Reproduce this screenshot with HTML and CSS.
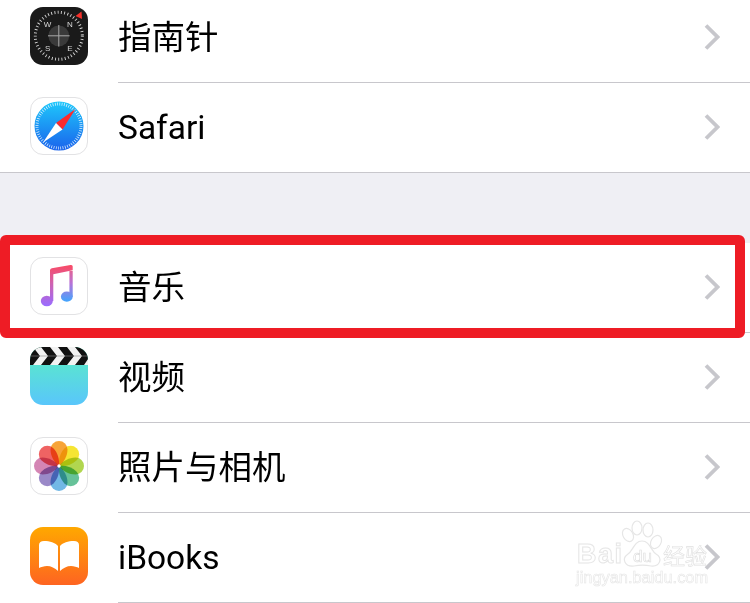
FILE: index.html
```html
<!DOCTYPE html>
<html lang="zh">
<head>
<meta charset="utf-8">
<title>设置</title>
<link rel="stylesheet" href="styles.css">
</head>
<body>
<main class="page">
  <section class="group group-first">
    <div class="row">
      <svg class="icon" viewBox="0 0 58 58">
        <defs><clipPath id="sq"><rect width="58" height="58" rx="13"/></clipPath></defs>
        <rect width="58" height="58" rx="13" fill="#1a1a1a"/>
        <circle cx="28.8" cy="28.8" r="23.5" fill="none" stroke="#d8d8d8" stroke-width="3" stroke-dasharray="0.9 2.4"/>
        <circle cx="28.8" cy="28.8" r="10.4" fill="#3a3a3a"/>
        <path d="M28.8 18V39.6M18 28.8H39.6" stroke="#a8a8a8" stroke-width="1"/>
        <path d="M51.5 4.5L52 12L45.5 9Z" fill="#f5302a"/>
        <text class="cmp" x="17.6" y="20.4">W</text>
        <text class="cmp" x="40" y="20.4">N</text>
        <text class="cmp" x="17.6" y="43.6">S</text>
        <text class="cmp" x="40" y="43.6">E</text>
      </svg>
      <span class="label">指南针</span>
      <svg class="chev" viewBox="0 0 16 26"><path d="M2 1.5L13.5 13L2 24.5" /></svg>
    </div>
    <div class="row">
      <svg class="icon icon-light" viewBox="0 0 58 58">
        <defs><linearGradient id="saf" x1="0" y1="0" x2="0" y2="1"><stop offset="0" stop-color="#1ec8fb"/><stop offset="1" stop-color="#1a63ec"/></linearGradient></defs>
        <circle cx="29" cy="29" r="24.5" fill="url(#saf)"/>
        <circle cx="29" cy="29" r="22" fill="none" stroke="#e6f4ff" stroke-width="3" stroke-dasharray="0.7 1.6"/>
        <path d="M45.5 12L32.5 32.5L26 26Z" fill="#fb2a2e"/>
        <path d="M13 45.5L26 26L32.5 32.5Z" fill="#fff"/>
      </svg>
      <span class="label">Safari</span>
      <svg class="chev" viewBox="0 0 16 26"><path d="M2 1.5L13.5 13L2 24.5" /></svg>
    </div>
  </section>

  <section class="group">
    <div class="row">
      <svg class="icon icon-light" viewBox="0 0 58 58">
        <defs>
          <linearGradient id="mus" gradientUnits="userSpaceOnUse" x1="0" y1="8" x2="0" y2="49"><stop offset="0" stop-color="#fa4a64"/><stop offset="0.45" stop-color="#cf62b0"/><stop offset="1" stop-color="#9a6cff"/></linearGradient>
          <linearGradient id="mus2" gradientUnits="userSpaceOnUse" x1="0" y1="8" x2="0" y2="45"><stop offset="0" stop-color="#f45a78"/><stop offset="0.5" stop-color="#b673d8"/><stop offset="1" stop-color="#3fa6ff"/></linearGradient>
        </defs>
        <path d="M20 13.5Q20 11.6 21.8 11.2L40.5 8Q42.7 7.6 42.7 9.6V13.3L23.3 17.3V44H20Z" fill="url(#mus)"/>
        <ellipse cx="16.8" cy="44" rx="6" ry="5.2" fill="url(#mus)"/>
        <path d="M39.4 14H42.7V40H39.4Z" fill="url(#mus2)"/>
        <ellipse cx="36.8" cy="39.7" rx="5.9" ry="5.1" fill="url(#mus2)"/>
      </svg>
      <span class="label">音乐</span>
      <svg class="chev" viewBox="0 0 16 26"><path d="M2 1.5L13.5 13L2 24.5" /></svg>
    </div>
    <div class="row">
      <svg class="icon" viewBox="0 0 58 58">
        <defs><linearGradient id="vid" x1="0" y1="0" x2="0" y2="1"><stop offset="0" stop-color="#5aefc2"/><stop offset="1" stop-color="#59c6fb"/></linearGradient></defs>
        <g clip-path="url(#sq)">
          <rect width="58" height="58" fill="url(#vid)"/>
          <rect width="58" height="18" fill="#111"/>
          <path d="M3 0H11L18 9L11 18H3L10 9ZM20 0H28L35 9L28 18H20L27 9ZM37 0H45L52 9L45 18H37L44 9ZM54 0H58V18H54L58 12V6Z" fill="#f2f2f2"/>
          <rect y="8.7" width="58" height="0.6" fill="#888"/>
        </g>
      </svg>
      <span class="label">视频</span>
      <svg class="chev" viewBox="0 0 16 26"><path d="M2 1.5L13.5 13L2 24.5" /></svg>
    </div>
    <div class="row">
      <svg class="icon icon-light" viewBox="0 0 58 58">
        <defs>
          <path id="petal" d="M29 29C24 25 20.5 19 20.5 12.5A8.5 8.5 0 0 1 37.5 12.5C37.5 19 34 25 29 29Z"/>
        </defs>
        <g class="petals">
          <use href="#petal" fill="#f79a22"/>
          <use href="#petal" fill="#f5e31c" transform="rotate(45 29 29)"/>
          <use href="#petal" fill="#a9d23c" transform="rotate(90 29 29)"/>
          <use href="#petal" fill="#55bb8e" transform="rotate(135 29 29)"/>
          <use href="#petal" fill="#62b0e4" transform="rotate(180 29 29)"/>
          <use href="#petal" fill="#8f7cc2" transform="rotate(225 29 29)"/>
          <use href="#petal" fill="#d078ac" transform="rotate(270 29 29)"/>
          <use href="#petal" fill="#ee5252" transform="rotate(315 29 29)"/>
        </g>
        <circle cx="29" cy="29" r="1.7" fill="#fff"/>
      </svg>
      <span class="label">照片与相机</span>
      <svg class="chev" viewBox="0 0 16 26"><path d="M2 1.5L13.5 13L2 24.5" /></svg>
    </div>
    <div class="row">
      <svg class="icon" viewBox="0 0 58 58">
        <defs><linearGradient id="bok" x1="0" y1="0" x2="0" y2="1"><stop offset="0" stop-color="#ffa800"/><stop offset="1" stop-color="#fe6421"/></linearGradient></defs>
        <rect width="58" height="58" rx="13" fill="url(#bok)"/>
        <path d="M9 18C9 15.5 11 14 14 14C20 14 25 15.5 28 19V44C25 41 21 39 17 39C14 39 11 40 9 41ZM49 18C49 15.5 47 14 44 14C38 14 33 15.5 30 19V44C33 41 37 39 41 39C44 39 47 40 49 41Z" fill="#fff"/>
      </svg>
      <span class="label">iBooks</span>
      <svg class="chev" viewBox="0 0 16 26"><path d="M2 1.5L13.5 13L2 24.5" /></svg>
    </div>
  </section>
</main>

<div class="highlight"></div>

<div class="watermark">
  <svg class="paw" viewBox="0 0 45 50">
    <g fill="#fff" stroke="#e6e6e6" stroke-width="1.2">
      <ellipse cx="8" cy="15" rx="5" ry="7" transform="rotate(-30 8 15)"/>
      <ellipse cx="17" cy="8" rx="5" ry="7"/>
      <ellipse cx="28" cy="10" rx="5" ry="7"/>
      <ellipse cx="36" cy="22" rx="5" ry="7" transform="rotate(30 36 22)"/>
      <path d="M22 21C14 21 13 31 8 34C1 39 5 47 14 46C19 45 26 45 31 46C40 47 43 38 36 34C31 31 30 21 22 21Z"/>
    </g>
  </svg>
  <span class="wm-bai">Bai</span>
  <span class="wm-du">du</span>
  <span class="wm-jy">经验</span>
  <span class="wm-url">jingyan.baidu.com</span>
</div>
</body>
</html>
```

FILE: styles.css
```css
html, body {
  margin: 0;
  padding: 0;
  height: 603px;
  overflow: hidden;
  background: #fff;
}

.page {
  width: 750px;
  background: #efeff4;
  font-family: Roboto, "Noto Sans CJK SC", sans-serif;
  color: #000;
}

.group {
  background: #fff;
}

.group-first {
  margin-top: -7px;
  margin-bottom: 70px;
  border-bottom: 1px solid #c8c7cc;
}

.row {
  position: relative;
  display: flex;
  align-items: flex-start;
  height: 89px;
  padding-left: 30px;
  padding-right: 30px;
}

.row::after {
  content: "";
  position: absolute;
  left: 118px;
  right: 0;
  bottom: -1px;
  height: 1px;
  background: #c8c7cc;
}

.group-first .row:last-child::after {
  display: none;
}

.row + .row {
  margin-top: 1px;
}

.icon {
  flex: none;
  width: 58px;
  height: 58px;
  margin-top: 14px;
}

.icon-light {
  outline: 1px solid #e2e2e4;
  outline-offset: -1px;
  border-radius: 13px;
  background: #fff;
}

.label {
  flex: 1;
  margin-left: 30px;
  margin-top: 25px;
  font-size: 33.5px;
  line-height: 40px;
  white-space: nowrap;
}

.chev {
  flex: none;
  width: 16px;
  height: 26px;
  margin-top: 31px;
  fill: none;
  stroke: #c7c7cc;
  stroke-width: 3.8;
}

.cmp {
  font-family: "Liberation Sans", sans-serif;
  font-size: 8px;
  fill: #d8d8d8;
  text-anchor: middle;
}

.petals use {
  mix-blend-mode: multiply;
  opacity: 0.9;
}

.highlight {
  position: absolute;
  left: 0;
  top: 235px;
  width: 745px;
  height: 103px;
  box-sizing: border-box;
  border: 10px solid #ee1c25;
  border-radius: 6px;
}

.watermark {
  position: absolute;
  left: 570px;
  top: 520px;
  width: 145px;
  height: 72px;
  color: #fff;
  font-family: "Liberation Sans", sans-serif;
  -webkit-text-stroke: 1px #e6e6e6;
}

.paw {
  position: absolute;
  left: 50px;
  top: 0;
  width: 45px;
  height: 50px;
}

.wm-bai {
  position: absolute;
  left: 7px;
  top: 23px;
  font-size: 27px;
  font-weight: bold;
  letter-spacing: 1.5px;
  line-height: 22px;
}

.wm-du {
  position: absolute;
  left: 63px;
  top: 27px;
  font-size: 17px;
  line-height: 20px;
  -webkit-text-stroke: 0.6px #dcdcdc;
}

.wm-jy {
  position: absolute;
  left: 93px;
  top: 21px;
  font-family: "Noto Sans CJK SC", sans-serif;
  font-size: 22px;
  line-height: 26px;
  white-space: nowrap;
  -webkit-text-stroke: 0.6px #e0e0e0;
}

.wm-url {
  position: absolute;
  left: 6px;
  top: 47px;
  font-size: 16.4px;
  line-height: 20px;
  white-space: nowrap;
  -webkit-text-stroke: 0.6px #e6e6e6;
}
```
